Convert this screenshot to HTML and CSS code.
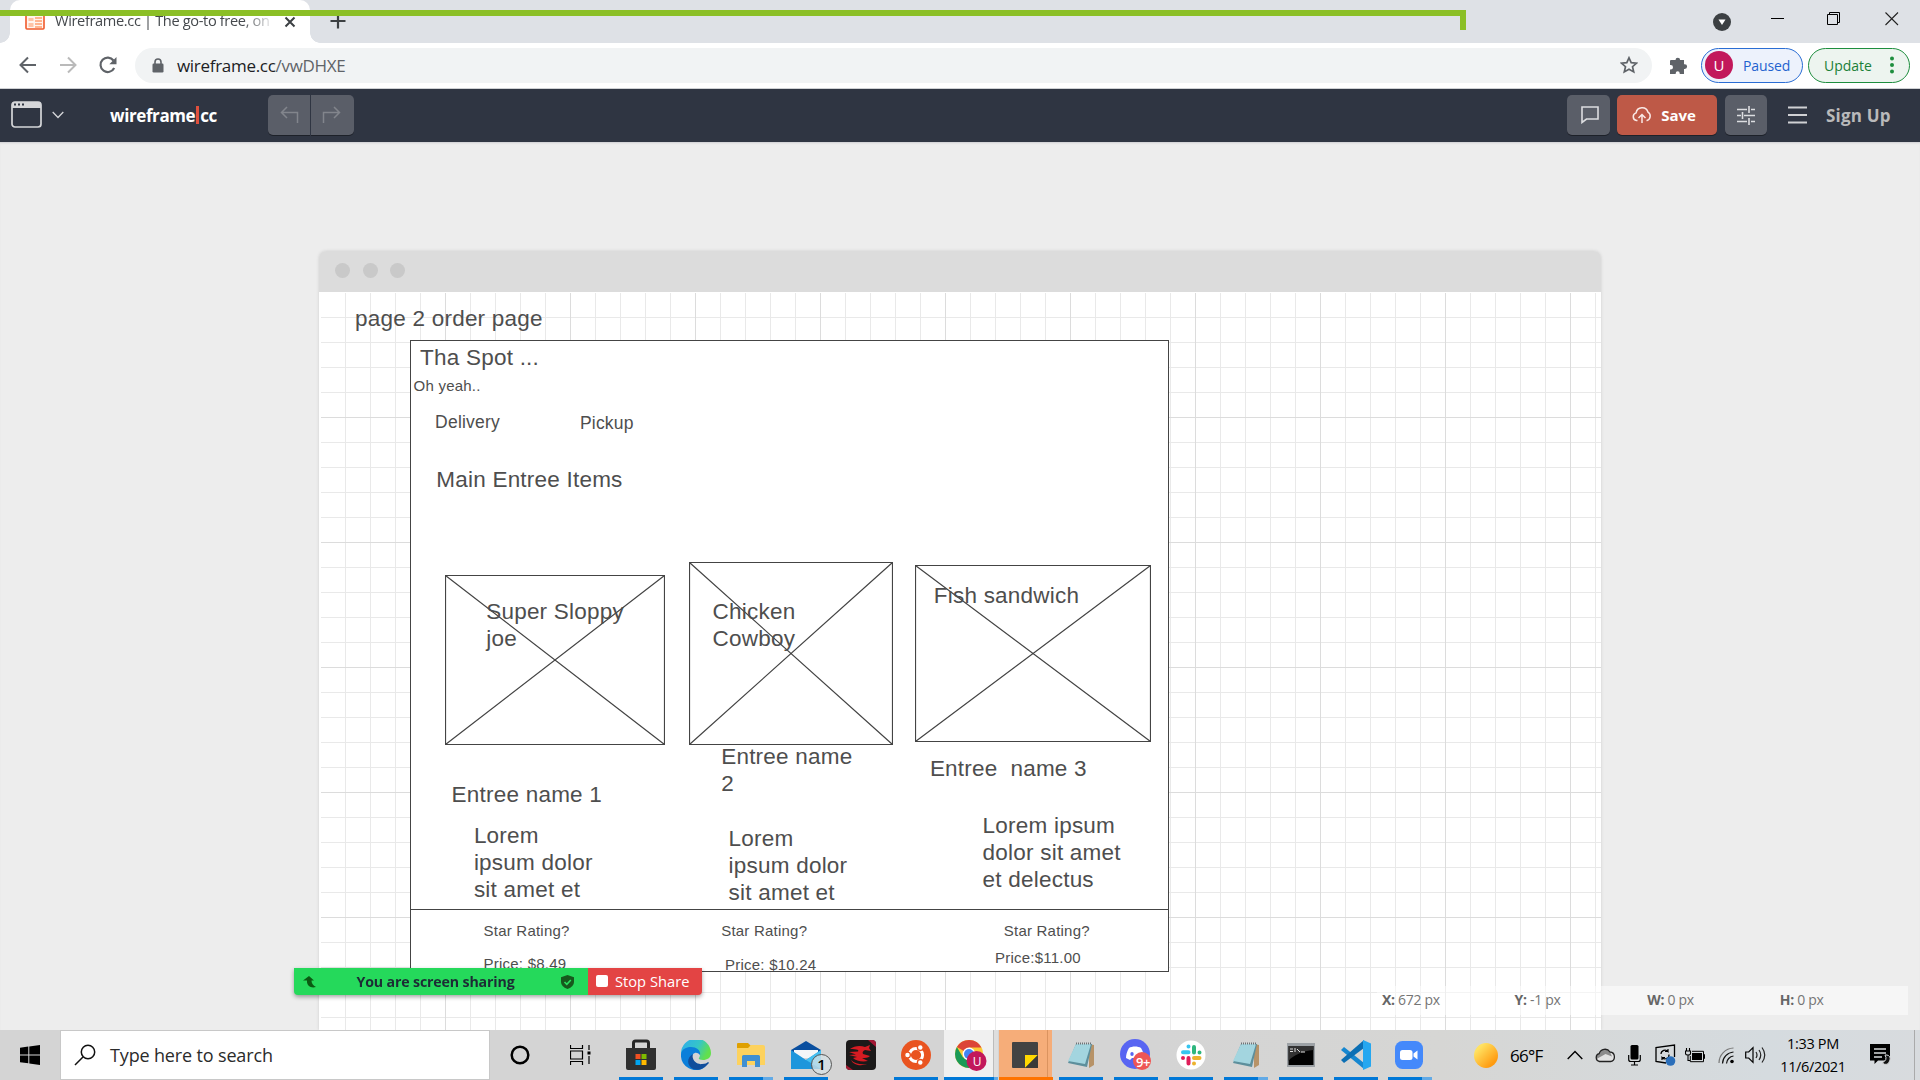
FILE: index.html
```
<!DOCTYPE html>
<html lang="en">
<head>
<meta charset="utf-8">
<title>Wireframe.cc</title>
<link rel="stylesheet" href="styles.css">
</head>
<body>
<div class="screen">
  <header class="tabstrip">
    <div class="tab">
      <svg class="favicon" width="20" height="20" viewBox="0 0 20 20"><rect x="1" y="1" width="18" height="17" rx="1" fill="#fff4ee" stroke="#f0592a" stroke-width="1.6"/><path d="M3.500 7h5v3h-5zM3.500 12h5v4h-5z" fill="#ffc3a6"/><path d="M10 7h7M10 10h7M10 13h7M10 16h7" stroke="#ff9e70" stroke-width="1.500"/></svg>
      <span class="tab-title">Wireframe.cc | The go-to free, on</span>
      <svg class="tab-close" width="12" height="12" viewBox="0 0 12 12"><path d="M1.500 1.500l9 9M10.500 1.500l-9 9" stroke="#3c4043" stroke-width="2"/></svg>
    </div>
    <svg class="tab-new" width="16" height="16" viewBox="0 0 16 16"><path d="M8 .5v15M.5 8h15" stroke="#3c4043" stroke-width="2.200"/></svg>
    <div class="window-buttons">
      <svg width="18" height="18" viewBox="0 0 18 18" class="wb-down"><circle cx="9" cy="9" r="9" fill="#3c4043"/><path d="M5.500 6.500h7L9 12z" fill="#fff"/></svg>
      <svg width="14" height="14" viewBox="0 0 14 14" class="wb-min"><path d="M0 7.500h13" stroke="#000"/></svg>
      <svg width="14" height="14" viewBox="0 0 14 14" class="wb-max"><path d="M.5 2.500h10v10H.5zM2.500 2.500v-2h10v10h-2" fill="none" stroke="#000"/></svg>
      <svg width="14" height="14" viewBox="0 0 14 14" class="wb-close"><path d="M.5.5l12.500 12.500M13 .5L.5 13" stroke="#222" stroke-width="1.100"/></svg>
    </div>
  </header>

  <nav class="toolbar">
    <svg class="nav-back" width="18" height="18" viewBox="0 0 18 18"><path d="M17 9H2M9 1.500L1.500 9 9 16.500" fill="none" stroke="#5f6368" stroke-width="2"/></svg>
    <svg class="nav-fwd" width="18" height="18" viewBox="0 0 18 18"><path d="M1 9h15M9 1.500L16.500 9 9 16.500" fill="none" stroke="#bababa" stroke-width="2"/></svg>
    <svg class="nav-reload" width="18" height="18" viewBox="0 0 18 18"><path d="M15.200 12A7.200 7.200 0 1 1 14.500 4.500" fill="none" stroke="#5f6368" stroke-width="2.200"/><path d="M17.500 1v7.200h-7.200z" fill="#5f6368"/></svg>
    <div class="url">
      <svg width="12" height="15" viewBox="0 0 12 15"><rect x=".5" y="5.500" width="11" height="9" rx="1.200" fill="#5f6368"/><path d="M3 6V4a3 3 0 0 1 6 0v2" fill="none" stroke="#5f6368" stroke-width="1.600"/></svg>
      <span class="url-text">wireframe.cc<span class="url-path">/vwDHXE</span></span>
      <svg class="star" width="18" height="18" viewBox="0 0 18 18"><path d="M9 1.800l2.200 4.900 5.300.5-4 3.500 1.200 5.200L9 13.200l-4.700 2.700 1.200-5.200-4-3.500 5.300-.5z" fill="none" stroke="#5f6368" stroke-width="1.700"/></svg>
    </div>
    <svg class="ext" width="19" height="19" viewBox="0 0 19 19"><path d="M2 4h4.500a2.300 2.300 0 1 1 4.600 0H15v4.300h.8a2.300 2.300 0 0 1 0 4.600H15V18h-4.300v-.8a2 2 0 0 0-4 0v.8H1v-4.500h.8a2.200 2.200 0 0 0 0-4.400H1V5a1 1 0 0 1 1-1z" fill="#5f6368"/></svg>
    <div class="pill paused"><span class="avatar">U</span><span class="pill-label">Paused</span></div>
    <div class="pill update"><span class="pill-label">Update</span><svg width="4" height="18" viewBox="0 0 4 18"><circle cx="2" cy="2.500" r="2" fill="#1e8e3e"/><circle cx="2" cy="9" r="2" fill="#1e8e3e"/><circle cx="2" cy="15.500" r="2" fill="#1e8e3e"/></svg></div>
  </nav>

  <div class="appbar">
    <svg class="win-icon" width="32" height="28" viewBox="0 0 32 28"><rect x="1" y="1" width="29" height="25" rx="3" fill="none" stroke="#d5d6d9" stroke-width="1.700"/><path d="M1 7V3.500A2.500 2.500 0 0 1 3.500 1h24A2.500 2.500 0 0 1 30 3.500V7z" fill="#d5d6d9"/><path d="M3 3.500h2M7 3.500h2M11 3.500h2" stroke="#2f3542" stroke-width="2"/></svg>
    <svg class="chev" width="12" height="8" viewBox="0 0 12 8"><path d="M.7 1L6 6.500 11.300 1" fill="none" stroke="#d5d6d9" stroke-width="1.300"/></svg>
    <div class="logo">wireframe<i></i>cc</div>
    <div class="history">
      <span><svg width="19" height="18" viewBox="0 0 19 18"><path d="M7 1L1.500 6.500 7 12M1.500 6.500h16V17" fill="none" stroke="#898c93" stroke-width="1.500"/></svg></span>
      <span><svg width="19" height="18" viewBox="0 0 19 18"><path d="M12 1l5.500 5.500L12 12M17.500 6.500h-16V17" fill="none" stroke="#898c93" stroke-width="1.500"/></svg></span>
    </div>
    <div class="app-actions">
      <div class="btn comment"><svg width="18" height="18" viewBox="0 0 18 18"><path d="M1 1h16v12H5.500L1 16.500z" fill="none" stroke="#dcdde0" stroke-width="1.600"/></svg></div>
      <div class="btn save"><svg width="20" height="18" viewBox="0 0 20 18"><path d="M5.500 14.500H4.500a3.900 3.900 0 0 1-.4-7.600A6.100 6.100 0 0 1 16 6.200a4.600 4.600 0 0 1-1 8.300h-.5M10 17V9M6.500 12L10 8.500l3.500 3.500" fill="none" stroke="#fae9e6" stroke-width="1.500"/></svg><span>Save</span></div>
      <div class="btn tune"><svg width="18" height="19" viewBox="0 0 18 19"><path d="M0 3.500h10M14 3.500h4M12 0v7M0 9.500h4M7 9.500h11M5.500 6v7M0 15.500h10M14 15.500h4M12 12v7" fill="none" stroke="#dcdde0" stroke-width="1.600"/></svg></div>
      <svg class="burger" width="19" height="18" viewBox="0 0 19 18"><path d="M0 1.500h19M0 9h19M0 16.500h19" stroke="#d0d1d4" stroke-width="1.800"/></svg>
      <span class="signup">Sign Up</span>
    </div>
  </div>

  <main class="workspace">
    <section class="browser-frame">
      <div class="frame-head"><i></i><i></i><i></i></div>
      <div class="frame-body">
        <div class="sheet"><div class="sheet-rule"></div></div>
        <svg class="ph ph1" viewBox="0 0 220 170"><path d="M.5.5h219v169H.5zM.5.5l219 169M219.500.5l-219 169"/></svg>
        <svg class="ph ph2" viewBox="0 0 204 183"><path d="M.5.5h203v182H.5zM.5.5l203 182M203.500.5l-203 182"/></svg>
        <svg class="ph ph3" viewBox="0 0 236 177"><path d="M.5.5h235v176H.5zM.5.5l235 176M235.500.5l-235 176"/></svg>
        <p class="t lg page-name">page 2 order page</p>
        <p class="t lg spot">Tha Spot ...</p>
        <p class="t sm ohyeah">Oh yeah..</p>
        <p class="t md delivery">Delivery</p>
        <p class="t md pickup">Pickup</p>
        <p class="t lg main-items">Main Entree Items</p>
        <p class="t lg joe">Super Sloppy
joe</p>
        <p class="t lg cowboy">Chicken
Cowboy</p>
        <p class="t lg fish">Fish sandwich</p>
        <p class="t lg name1">Entree name 1</p>
        <p class="t lg name2">Entree name
2</p>
        <p class="t lg name3">Entree  name 3</p>
        <p class="t lg lorem1">Lorem
ipsum dolor
sit amet et</p>
        <p class="t lg lorem2">Lorem
ipsum dolor
sit amet et</p>
        <p class="t lg lorem3">Lorem ipsum
dolor sit amet
et delectus</p>
        <p class="t sm star1">Star Rating?</p>
        <p class="t sm star2">Star Rating?</p>
        <p class="t sm star3">Star Rating?</p>
        <p class="t sm price1">Price: $8.49</p>
        <p class="t sm price2">Price: $10.24</p>
        <p class="t sm price3">Price:$11.00</p>
      </div>
    </section>
    <div class="coords"><span><b>X:</b> 672 px</span><span><b>Y:</b> -1 px</span><span><b>W:</b> 0 px</span><span><b>H:</b> 0 px</span></div>
  </main>

  <footer class="taskbar">
    <div class="start"><svg width="20" height="20" viewBox="0 0 20 20"><path d="M0 2.800L8.300 1.600v7.800H0zM9.300 1.500L20 0v9.400H9.300zM0 10.400h8.300v7.900L0 17.200zM9.300 10.400H20V20L9.300 18.500z"/></svg></div>
    <div class="search"><svg width="22" height="22" viewBox="0 0 22 22"><circle cx="14" cy="8" r="6.700" fill="none" stroke="#111" stroke-width="1.500"/><path d="M9.200 12.800L1 21" stroke="#111" stroke-width="1.500"/></svg><span>Type here to search</span></div>
    <div class="cell cortana"><svg width="20" height="20" viewBox="0 0 20 20"><circle cx="10" cy="10" r="8.300" fill="none" stroke="#000" stroke-width="2.500"/></svg></div>
    <div class="cell taskview"><svg width="21" height="20" viewBox="0 0 21 20"><path d="M.5 0v3.500h12V0M.5 20v-3.500h12V20M.5 6h12v8H.5zM19 0v5M19 11v8" fill="none" stroke="#000" stroke-width="1.200"/><path d="M17.500 6.500h3v3h-3z"/></svg></div>
    <div class="apps">
      <div class="app on"><svg width="30" height="32" viewBox="0 0 30 32"><path d="M7.500 9V4a2 2 0 0 1 2-2h11a2 2 0 0 1 2 2v5" fill="none" stroke="#262626" stroke-width="3"/><path d="M0 9h30v20a2 2 0 0 1-2 2H2a2 2 0 0 1-2-2z" fill="#303030"/><path d="M9.500 15h5v5h-5z" fill="#f25022"/><path d="M15.500 15h5v5h-5z" fill="#7fba00"/><path d="M9.500 21h5v5h-5z" fill="#00a4ef"/><path d="M15.500 21h5v5h-5z" fill="#ffb900"/></svg></div>
      <div class="app on"><svg width="30" height="30" viewBox="0 0 30 30"><defs><linearGradient id="eg" x1="0" y1="0" x2="1" y2=".4"><stop offset=".1" stop-color="#2fb0e8"/><stop offset=".6" stop-color="#35c5c8"/><stop offset="1" stop-color="#62e04c"/></linearGradient></defs><path d="M0 14A15 15 0 0 1 30 13c0 5-4 7-8 7-3 0-5-1-4-2 2-3 1-7-4-8-5 0-9 1-14 4z" fill="url(#eg)"/><path d="M0 14C1 9 5 7 10 7c6 0 10 4 9 8-4-5-9-1-8 4 1 6 7 9 13 8A15 15 0 0 1 0 14z" fill="#0b7fda"/><path d="M12 14c-2 6 4 11 9 10 3 0 5-1 6-2 1 0 1 1 0 2-4 5-10 7-15 5-7-4-6-12 0-15z" fill="#114e9c"/></svg></div>
      <div class="app on more"><svg width="28" height="24" viewBox="0 0 28 24"><path d="M0 1a1 1 0 0 1 1-1h10l3 3v6H0z" fill="#dfa000"/><path d="M0 5h11l3-3h12a2 2 0 0 1 2 2v18H0z" fill="#fdd25e"/><path d="M5 24V13.500a1.500 1.500 0 0 1 1.500-1.500h15a1.500 1.500 0 0 1 1.500 1.500V24h-5v-6h-8v6z" fill="#3f8fd2"/></svg></div>
      <div class="app on mail"><svg width="30" height="28" viewBox="0 0 30 28"><path d="M0 9L15 0l15 9v6H0z" fill="#0a4f9f"/><path d="M3 9h24v8H3z" fill="#f4f6f8"/><path d="M0 9l15 10L30 9v19H0z" fill="#1d96dc"/><path d="M30 9v19L15 19z" fill="#45c0f2"/></svg><b>1</b></div>
      <div class="app"><svg width="30" height="30" viewBox="0 0 30 30"><rect width="30" height="30" rx="4" fill="#1b1919"/><path d="M4 9c4-3 10-4 15-2l5-2-1 3 2 3-6-1c-2 1-3 2-2 4l7 2c-2 2-5 2-8 2l6 3c-6 1-12 0-15-3l4-1-8-2 7-.6-7-2.400 9-.4c1-1.500 0-2.600-8-2.600z" fill="#d51b22"/><path d="M5 20c4 4 10 5 16 4-5 2-13 2-16-4z" fill="#d51b22"/><path d="M22 0h4a4 4 0 0 1 4 4v3z" fill="#a31835"/><path d="M0 25l7 5H4a4 4 0 0 1-4-4z" fill="#a31830"/></svg></div>
      <div class="app on"><svg width="30" height="30" viewBox="0 0 30 30"><circle cx="15" cy="15" r="15" fill="#e95420"/><circle cx="15" cy="15" r="6.600" fill="none" stroke="#fff" stroke-width="3"/><g fill="#fff" stroke="#e95420" stroke-width="1.300"><circle cx="6.500" cy="15" r="2.900"/><circle cx="19.300" cy="7.600" r="2.900"/><circle cx="19.300" cy="22.400" r="2.900"/></g></svg></div>
      <div class="app on chrome more"><svg width="32" height="32" viewBox="0 0 32 32"><circle cx="14" cy="15" r="14" fill="#fcc934"/><path d="M14 15L1.900 8A14 14 0 0 1 26.500 8.500H14z" fill="#dc4437"/><path d="M1.900 8A14 14 0 0 0 14 29l6-10.500H8z" fill="#1a9a57"/><circle cx="14" cy="15" r="6.400" fill="#fff"/><circle cx="14" cy="15" r="5" fill="#4285f4"/><circle cx="21.500" cy="22" r="10" fill="#c2185b"/></svg><em>U</em></div>
      <div class="app sticky"><svg width="26" height="26" viewBox="0 0 26 26"><rect width="26" height="26" rx="1" fill="#434343"/><path d="M13 13h13L13 26z" fill="#ffd800"/><path d="M26 13v13H13z" fill="#3a3a38"/></svg></div>
      <div class="app on"><svg width="28" height="28" viewBox="0 0 28 28"><path d="M22 3l5 1v20l-5 3z" fill="#b79368"/><path d="M9 3h16l-5 23L1 22z" fill="#5d8f9c"/><path d="M9 3h15l-6 20L1 20z" fill="#a3d5df"/><path d="M9 2.500h15" stroke="#6d7478" stroke-width="2" stroke-dasharray="1 1"/></svg></div>
      <div class="app on discord"><svg width="32" height="32" viewBox="0 0 32 32"><circle cx="15" cy="15" r="15" fill="#5865f2"/><path d="M9 9c3-2 9-2 12 0 2 3 3 7 3 10l-4 2-2-2h-6l-2 2-4-2c0-3 1-7 3-10z" fill="#fff"/><ellipse cx="12" cy="15" rx="1.700" ry="2" fill="#5865f2"/><circle cx="22" cy="22" r="9" fill="#ee5655"/></svg><em>9+</em></div>
      <div class="app on"><svg width="30" height="30" viewBox="0 0 30 30"><circle cx="15" cy="15" r="14.500" fill="#fff"/><g fill="none" stroke-width="4" stroke-linecap="round"><path d="M12.500 6.500v0M7 12.300h5.500" stroke="#36c5f0"/><path d="M23.500 12.500v0M18 7v5.500" stroke="#2eb67d"/><path d="M18 23.500v0M18 18h5.500" stroke="#ecb22e"/><path d="M7 18v0M12.500 18v5.500" stroke="#e01e5a"/></g></svg></div>
      <div class="app on more"><svg width="28" height="28" viewBox="0 0 28 28"><path d="M22 3l5 1v20l-5 3z" fill="#b79368"/><path d="M9 3h16l-5 23L1 22z" fill="#5d8f9c"/><path d="M9 3h15l-6 20L1 20z" fill="#a3d5df"/><path d="M9 2.500h15" stroke="#6d7478" stroke-width="2" stroke-dasharray="1 1"/></svg></div>
      <div class="app on"><svg width="28" height="24" viewBox="0 0 28 24"><rect width="28" height="24" fill="#9da2a6"/><path d="M1.500 3h25v19h-25z" fill="#020202"/><path d="M1.500 3h25v4C16 8 6 12 1.500 18z" fill="#333"/><path d="M3 6h3M3 8.500h3M8 5v4M10 6l3 3M14 9h4" stroke="#ddd" stroke-width="1"/></svg></div>
      <div class="app on"><svg width="30" height="30" viewBox="0 0 30 30"><path d="M0 10l3-3 20 16v6z" fill="#1687d0"/><path d="M0 20l3 3L23 8V0z" fill="#0b6fb4"/><path d="M22 0l8 3.500v23L22 30z" fill="#25a7f0"/></svg></div>
      <div class="app on more zoom"><svg width="28" height="28" viewBox="0 0 28 28"><rect width="28" height="28" rx="7.500" fill="#4489fb"/><rect x="5" y="9" width="12.500" height="10" rx="2.500" fill="#fff"/><path d="M18.500 12.500L22.500 9.500v9L18.500 15.500z" fill="#fff"/></svg></div>
    </div>
    <div class="tray">
      <i class="sun"></i><span class="temp">66°F</span>
      <svg class="up" width="16" height="10" viewBox="0 0 16 10"><path d="M.7 9L8 1.500 15.300 9" fill="none" stroke="#000" stroke-width="1.400"/></svg>
      <svg class="cloud" width="20" height="16" viewBox="0 0 20 16"><path d="M4.500 14.500a4 4 0 0 1-.3-7.800A6 6 0 0 1 15 5 4.800 4.800 0 0 1 15.500 14.500z" fill="#e2e2e2"/><path d="M1.500 12a4 4 0 0 1 2.700-5.300A6 6 0 0 1 15 5l2 4.500-6.500-2.500z" fill="#8c8c8c"/><path d="M4.500 14.500a4 4 0 0 1-.3-7.800A6 6 0 0 1 15 5 4.800 4.800 0 0 1 15.500 14.500z" fill="none" stroke="#222" stroke-width="1.300"/></svg>
      <svg class="mic" width="13" height="22" viewBox="0 0 13 22"><rect x="2.500" y="1" width="8" height="14.500" rx="1.500"/><path d="M.7 11v4.500q0 2 2 2h7.600q2 0 2-2V11M6.500 17v4M3 21h7" fill="none" stroke="#000" stroke-width="1.200"/></svg>
      <svg class="sync" width="21" height="22" viewBox="0 0 21 22"><path d="M11 19L1 17.500V3.500L19.500 1v12" fill="none" stroke="#000" stroke-width="1.300"/><path d="M6 10a4 4 0 0 1 7-2.500V5M13 7.500h-3M14 10.500a4 4 0 0 1-7 3v2.500M7 13.500h3" fill="none" stroke="#000" stroke-width="1.200"/><circle cx="15.500" cy="17" r="4.800" fill="#2b6fba"/></svg>
      <svg class="bat" width="20" height="15" viewBox="0 0 20 15"><path d="M1.500 0v2.500M4.500 0v2.500M.5 3h5v2.500q0 1.500-2.500 1.500-2.500 0-2.500-1.500zM3 7v5.500h2" fill="none" stroke="#000" stroke-width="1.100"/><path d="M7 5h10v7H7z"/><path d="M7 3.300h11.500v10.400H5.300V8M18.500 6.500h1v4h-1" fill="none" stroke="#000" stroke-width="1"/></svg>
      <svg class="wifi" width="16" height="17" viewBox="0 0 16 17"><g fill="none" stroke="#111" stroke-width="1.200"><path d="M1 16A15 15 0 0 1 15.500 1" stroke="#777"/><path d="M4.500 16.500A12 12 0 0 1 15.500 5M8.500 16.500A8 8 0 0 1 15.500 9"/></g><circle cx="14" cy="14.500" r="1.800"/></svg>
      <svg class="vol" width="21" height="20" viewBox="0 0 21 20"><path d="M.7 7h3L8 2.700v14.600L3.700 13h-3z" fill="none" stroke="#000" stroke-width="1.200"/><path d="M11 7q2 3 0 6M14 5q3.500 5 0 10M17 2.500q5.500 7.500 0 15" fill="none" stroke="#222" stroke-width="1.200"/></svg>
      <div class="clock"><span>1:33 PM</span><span>11/6/2021</span></div>
      <svg class="note" width="21" height="22" viewBox="0 0 21 22"><path d="M0 0h20v16.500H8L4.500 20v-3.500H0z"/><path d="M4 5h12M4 9h12M4 13h8" stroke="#d8dadc" stroke-width="1.400"/><path d="M15 11q3 5-3 8 6 4 8-3 1-4-3-5z" fill="#111" stroke="#d8dadc"/></svg>
    </div>
  </footer>

  <div class="share-edge"></div>
  <div class="sharebar">
    <div class="sharing"><svg class="sh-arrow" width="13" height="12" viewBox="0 0 13 12"><path d="M6 0l5 4.500H8.500c0 3 1.500 5 4.500 6.500-5 1.500-9.500-1-9-6.500H0z" fill="#0b5a12"/></svg><span>You are screen sharing</span><svg width="13" height="14" viewBox="0 0 13 14"><path d="M6.500 0L13 2.200V7q0 4.500-6.500 7Q0 11.500 0 7V2.200z" fill="#17591d"/><path d="M3.500 7l2.300 2.300L9.800 5" fill="none" stroke="#2be060" stroke-width="1.600"/></svg></div>
    <div class="stop"><i></i><span>Stop Share</span></div>
  </div>
</div>
</body>
</html>
```
FILE: styles.css
```
* { box-sizing: border-box; }
body { margin: 0; font-family: "Open Sans", "Noto Sans", sans-serif; }
svg { display: block; flex: none; }
p { margin: 0; }
span { white-space: nowrap; }

.screen { position: relative; width: 1920px; height: 1080px; overflow: hidden; display: flex; flex-direction: column; background: #ededed; }

/* browser chrome */
.tabstrip { height: 43px; background: radial-gradient(circle at 0 33px, #dee1e6 9.500px, #fff 10px) 0 33px / 10px 10px no-repeat, radial-gradient(circle at 10px 0, #dee1e6 9.500px, #fff 10px) 310px 33px / 10px 10px no-repeat, #dee1e6; background: radial-gradient(circle at 0 0, #dee1e6 9.500px, #fff 10px) 0 33px / 10px 10px no-repeat, radial-gradient(circle at 10px 0, #dee1e6 9.500px, #fff 10px) 310px 33px / 10px 10px no-repeat, #dee1e6; display: flex; flex: none; padding-left: 10px; }
.tab { width: 300px; height: 43px; background: #fff; border-radius: 10px 10px 0 0; display: flex; align-items: center; padding: 0 14px 0 15px; }
.favicon { margin-top: -2px; }
.tab-title { margin: -3px 0 0 10px; width: 219px; overflow: hidden; font-size: 14.600px; letter-spacing: -.35px; color: #45494d; -webkit-mask-image: linear-gradient(90deg, #000 86%, transparent 101%); mask-image: linear-gradient(90deg, #000 86%, transparent 101%); }
.tab-close { margin-left: 11px; }
.tab-new { margin: 13px 0 0 20px; }
.window-buttons { margin-left: auto; display: flex; padding-right: 21px; }
.wb-down { margin: 13px 40px 0 0; }
.wb-min { margin: 11px 42px 0 0; }
.wb-max { margin: 12px 44px 0 0; }
.wb-close { margin-top: 12px; }

.toolbar { height: 46px; flex: none; background: #fff; border-bottom: 1px solid #cfd1d4; display: flex; align-items: center; padding: 0 10px 1px 19px; }
.nav-fwd { margin-left: 22px; }
.nav-reload { margin-left: 22px; }
.url { width: 1517px; height: 35px; margin-left: 18px; border-radius: 18px; background: #f1f3f4; display: flex; align-items: center; padding: 0 14px 0 17px; }
.url-text { margin-left: 13px; font-size: 17px; letter-spacing: -.3px; color: #202124; }
.url-path { color: #5f6368; }
.star { margin-left: auto; }
.ext { margin-left: 17px; }
.pill { height: 35px; border-radius: 18px; display: flex; align-items: center; font-size: 15px; }
.paused { width: 102px; margin-left: 13px; border: 1.500px solid #2a6dd4; background: #edf2fc; color: #1f62cf; padding-left: 3px; }
.avatar { width: 28px; height: 28px; border-radius: 50%; background: #c2185b; color: #fff; text-align: center; line-height: 28px; }
.paused .pill-label { margin-left: 10px; font-size: 14px; letter-spacing: -.1px; }
.update { width: 102px; margin-left: 5px; border: 1.500px solid #1e8e3e; background: #edf4ef; color: #1b7f38; padding: 0 15px 0 15px; justify-content: space-between; }
.update .pill-label { font-size: 14px; }

/* application bar */
.appbar { height: 53px; flex: none; background: #2f3542; display: flex; align-items: center; padding: 0 28px 1px 11px; }
.win-icon { margin-top: -1px; }
.chev { margin-left: 9px; }
.logo { margin-left: 46px; width: 108px; display: flex; align-items: center; color: #fff; font-size: 17px; font-weight: 700; letter-spacing: -.4px; }
.logo i { width: 3px; height: 18px; margin: 0 1px; background: #e0503d; flex: none; }
.history { margin-left: 50px; display: flex; gap: 1px; }
.history span { width: 42px; height: 40px; background: #5a5e68; border-radius: 5px 0 0 5px; box-shadow: 0 1px 0 #1d2129; display: grid; place-items: center; }
.history span + span { width: 43px; border-radius: 0 5px 5px 0; padding-right: 3px; }
.history svg { opacity: .85; }
.app-actions { margin-left: auto; display: flex; align-items: center; }
.btn { height: 40px; border-radius: 5px; background: #5a5e68; box-shadow: 0 1px 0 #1d2129; display: flex; align-items: center; justify-content: center; }
.comment { width: 43px; margin-right: 7px; padding-left: 2px; }
.save { width: 100px; margin-right: 8px; background: #be5947; gap: 9px; color: #fff; font-weight: 700; font-size: 15px; padding-right: 6px; letter-spacing: -.1px; }
.tune { width: 42px; margin-right: 21px; }
.burger { margin-right: 19px; }
.signup { color: #b9b9ba; font-size: 17px; font-weight: 700; width: 66px; letter-spacing: .2px; }

/* canvas */
.workspace { position: relative; height: 888px; flex: none; padding: 109px 0 0 319px; box-shadow: inset 0 2px 2px -1px #cfcfd2; overflow: hidden; }
.browser-frame { width: 1282px; box-shadow: 0 0 3px #ccc; border-radius: 7px 7px 0 0; }
.frame-head { height: 41px; background: #dcdcdc; border-radius: 7px 7px 0 0; display: flex; align-items: center; gap: 12.500px; padding: 0 0 2px 16px; }
.frame-head i { width: 15px; height: 15px; border-radius: 50%; background: #c9c9c9; }
.frame-body { position: relative; height: 738px; border-left: 1px solid #fff; background-color: #fff; background-origin: padding-box;
  background-image: linear-gradient(90deg, #dcdcdc 1px, transparent 1px), linear-gradient(#dcdcdc 1px, transparent 1px), linear-gradient(90deg, #e9e9e9 1px, transparent 1px), linear-gradient(#e9e9e9 1px, transparent 1px);
  background-size: 125px 125px, 125px 125px, 25px 25px, 25px 25px; }
.frame-body::before { content: ""; position: absolute; left: 0; top: 0; right: 0; bottom: 0; border: solid #fff; border-width: 1px 0 0 1px; }

/* drawn elements: offsets are canvas coordinates */
.sheet { position: absolute; left: 90px; top: 48px; width: 759px; height: 632px; background: #fff; border: 1px solid #444; }
.sheet-rule { height: 569px; border-bottom: 1px solid #444; }
.ph { position: absolute; fill: none; stroke: #444; stroke-width: 1.200; }
.ph1 { left: 125px; top: 283px; width: 220px; height: 170px; }
.ph2 { left: 369px; top: 270px; width: 204px; height: 183px; }
.ph3 { left: 595px; top: 273px; width: 236px; height: 177px; }
.t { position: absolute; margin-left: .6px; white-space: pre; font-family: "Liberation Sans", Arial, sans-serif; color: #4e4e4e; letter-spacing: .22px; }
.lg { font-size: 22.500px; line-height: 27px; }
.md { font-size: 17.500px; line-height: 21px; }
.sm { font-size: 15px; line-height: 18px; }
.page-name { left: 34.500px; top: 13px; }
.spot { left: 99.500px; top: 52px; }
.ohyeah { left: 93px; top: 85px; }
.delivery { left: 114.500px; top: 120px; }
.pickup { left: 259.300px; top: 121px; }
.main-items { left: 115.700px; top: 174px; }
.joe { left: 165.600px; top: 306px; }
.cowboy { left: 392px; top: 306px; }
.fish { left: 613.200px; top: 290px; }
.name1 { left: 131px; top: 489px; }
.name2 { left: 400.600px; top: 451px; }
.name3 { left: 609.300px; top: 463px; }
.lorem1 { left: 153.300px; top: 530px; }
.lorem2 { left: 408px; top: 533px; }
.lorem3 { left: 662px; top: 520px; }
.star1 { left: 163px; top: 630px; }
.star2 { left: 400.600px; top: 630px; }
.star3 { left: 683.200px; top: 630px; }
.price1 { left: 163px; top: 663px; }
.price2 { left: 404.500px; top: 664px; }
.price3 { left: 674.500px; top: 657px; }

/* cursor read-out over the canvas */
.coords { position: absolute; left: 1377px; top: 844px; width: 531px; height: 29px; background: rgba(255,255,255,.5); display: flex; align-items: center; font-size: 14px; letter-spacing: -.3px; color: #757575; padding: 0 0 2px 5px; }
.coords span { width: 132.600px; flex: none; }
.coords b { color: #666; }

/* taskbar */
.taskbar { height: 50px; flex: none; display: flex; background: linear-gradient(90deg, #d4d4d4 60%, #d6d6d4 75%, #d5dbdf 92%, #d8dbde); }
.start { width: 60px; display: grid; place-items: center; }
.search { width: 430px; border: 1px solid #c8c8c8; background: #fff; display: flex; align-items: center; gap: 14px; padding-left: 13px; font-size: 18px; color: #2b2b2b; letter-spacing: -.15px; }
.cell { width: 60px; display: grid; place-items: center; }
.taskview { width: 59px; padding-left: 1px; }
.apps { display: flex; width: 824px; padding-left: 5px; }
.app { position: relative; width: 55px; flex: none; display: grid; place-items: center; padding-right: 1px; }
.app.on::after { content: ""; position: absolute; left: 5px; bottom: 0; width: 44px; height: 3px; background: #0078d7; }
.app.more::after { background: linear-gradient(90deg, #0078d7 34px, #62aae6 34px); }
.app.zoom { padding-right: 5px; }
.app.zoom::after { left: 4px; }
.app.chrome { background: linear-gradient(90deg, #f0f0f0 49px, #bcbcbc 49px 50px, #dedede 50px 54px, transparent 54px); }
.app.chrome::after { left: 0; width: 54px; background: linear-gradient(90deg, #0078d7 50px, #62aae6 50px); }
.app.sticky { padding-right: 4px; background: linear-gradient(90deg, #f6ad79 48px, #db935f 48px 49px, #f6ad79 49px 53px, transparent 53px); }
.app.sticky::after { content: ""; position: absolute; left: 0; bottom: 0; width: 54px; height: 3px; background: #ff7300; }
.app b { position: absolute; right: 2px; top: 24px; width: 21px; height: 21px; border: 1px solid #555; border-radius: 50%; background: rgba(215,225,230,.75); font-size: 15px; line-height: 19px; font-weight: 600; text-align: center; }
.app em { position: absolute; color: #fff; font-style: normal; text-align: center; font-size: 12px; line-height: 14px; width: 20px; right: 12px; top: 25px; }
.chrome em { right: 12px; }
.discord em { right: 11px; font-size: 13px; font-weight: 600; letter-spacing: -.5px; }
.tray { flex: 1; display: flex; align-items: center; position: relative; border-right: 1px solid #aaa; margin-right: 5px; }
.sun { width: 24px; height: 25px; flex: none; border-radius: 50%; background: linear-gradient(135deg, #ffe262 20%, #ff9b10 80%); margin-left: 41px; }
.temp { margin-left: 12px; width: 37px; font-size: 17px; letter-spacing: -.7px; }
.up { margin-left: 20px; }
.cloud { margin-left: 12px; }
.mic { margin-left: 13px; }
.sync { margin-left: 14px; }
.bat { margin-left: 9px; }
.wifi { margin-left: 13px; }
.vol { margin-left: 11px; }
.clock { margin-left: 8px; width: 78px; flex: none; height: 50px; padding-top: 2px; display: flex; flex-direction: column; align-items: center; font-size: 14.500px; line-height: 23px; letter-spacing: -.35px; }
.note { margin-left: 18px; }

/* screen sharing overlay */
.share-edge { position: absolute; left: 0; top: 10px; width: 1466px; height: 20px; border: 0 solid #8bbf26; border-width: 6px 6px 0 0; }
.sharebar { position: absolute; left: 294px; top: 968px; height: 27px; display: flex; border-radius: 0 0 4px 4px; overflow: hidden; filter: drop-shadow(0 2px 2px rgba(0,0,0,.35)); }
.sharing { width: 294px; background: #25d95b; display: flex; align-items: center; padding: 0 14px 0 9px; justify-content: space-between; font-size: 14.200px; font-weight: 700; color: #1d2b35; letter-spacing: -.15px; }
.sharing span { margin-right: 6px; }
.stop { width: 114px; background: #e34444; color: #fff; display: flex; align-items: center; gap: 7px; padding: 0 0 2px 8px; font-size: 14.700px; }
.stop i { width: 12px; height: 12px; border-radius: 2px; background: #fff; flex: none; }
```
